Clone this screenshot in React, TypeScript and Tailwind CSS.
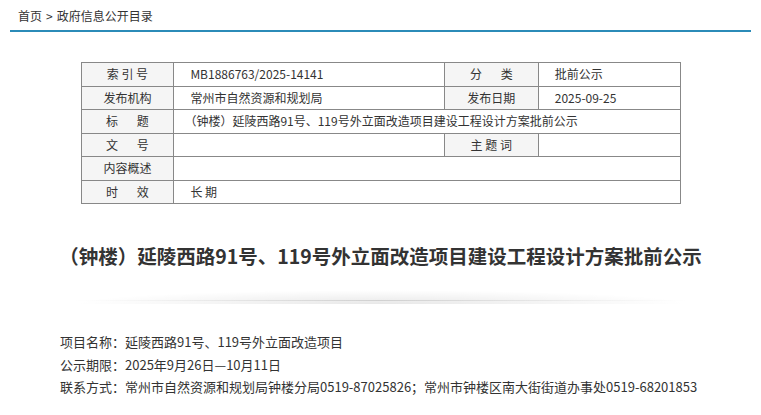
export default function App() {
  const font = { fontFamily: '"Noto Sans CJK SC", "Microsoft YaHei", sans-serif' };
  const label = 'bg-[#f5f5f5] border border-[#888] text-center h-[23.5px] px-2';
  const value = 'border border-[#888] h-[23.5px] px-4 text-left';

  return (
    <div className="w-[761px] h-[415px] bg-white text-[#333] overflow-hidden" style={font}>
      {/* Breadcrumb */}
      <div className="mx-[10px] border-b-2 border-[#2b8bb8] pl-2 pt-[8px] pb-[6px] text-[12px] leading-[16px]">
        <span>首页</span>
        <span className="mx-1">&gt;</span>
        <span>政府信息公开目录</span>
      </div>

      {/* Info table */}
      <table className="mx-auto mt-[30px] w-[600px] border-collapse text-[12px] leading-[16px]">
        <colgroup>
          <col className="w-[93px]" />
          <col className="w-[271px]" />
          <col className="w-[94px]" />
          <col className="w-[142px]" />
        </colgroup>
        <tbody>
          <tr>
            <td className={label}>索 引 号</td>
            <td className={value}>MB1886763/2025-14141</td>
            <td className={label}>分&nbsp;&nbsp;&nbsp;&nbsp;&nbsp;&nbsp;&nbsp;类</td>
            <td className={value}>批前公示</td>
          </tr>
          <tr>
            <td className={label}>发布机构</td>
            <td className={value}>常州市自然资源和规划局</td>
            <td className={label}>发布日期</td>
            <td className={value}>2025-09-25</td>
          </tr>
          <tr>
            <td className={label}>标&nbsp;&nbsp;&nbsp;&nbsp;&nbsp;&nbsp;&nbsp;题</td>
            <td className={value + ' pl-[10px]'} colSpan={3}>
              （钟楼）延陵西路91号、119号外立面改造项目建设工程设计方案批前公示
            </td>
          </tr>
          <tr>
            <td className={label}>文&nbsp;&nbsp;&nbsp;&nbsp;&nbsp;&nbsp;&nbsp;号</td>
            <td className={value}></td>
            <td className={label}>主 题 词</td>
            <td className={value}></td>
          </tr>
          <tr>
            <td className={label}>内容概述</td>
            <td className={value} colSpan={3}></td>
          </tr>
          <tr>
            <td className={label}>时&nbsp;&nbsp;&nbsp;&nbsp;&nbsp;&nbsp;&nbsp;效</td>
            <td className={value} colSpan={3}>长&nbsp;期</td>
          </tr>
        </tbody>
      </table>

      {/* Title */}
      <h1 className="mt-[38px] text-center text-[19.5px] leading-[28px] font-bold text-[#333]">
        （钟楼）延陵西路91号、119号外立面改造项目建设工程设计方案批前公示
      </h1>

      {/* Shadow divider */}
      <div className="mx-auto mt-[20px] w-[620px] h-[14px] bg-[radial-gradient(ellipse_at_center_bottom,rgba(0,0,0,0.09),rgba(0,0,0,0)_70%)] relative">
        <div className="absolute bottom-[3px] left-0 right-0 h-px bg-[linear-gradient(to_right,rgba(0,0,0,0),rgba(0,0,0,0.12),rgba(0,0,0,0))]" />
      </div>

      {/* Body */}
      <div className="mt-[27px] pl-[60px] text-[13px] leading-[22.5px] text-[#333]">
        <p>项目名称：延陵西路91号、119号外立面改造项目</p>
        <p>公示期限：2025年9月26日—10月11日</p>
        <p>联系方式：常州市自然资源和规划局钟楼分局0519-87025826；常州市钟楼区南大街街道办事处0519-68201853</p>
      </div>
    </div>
  );
}
